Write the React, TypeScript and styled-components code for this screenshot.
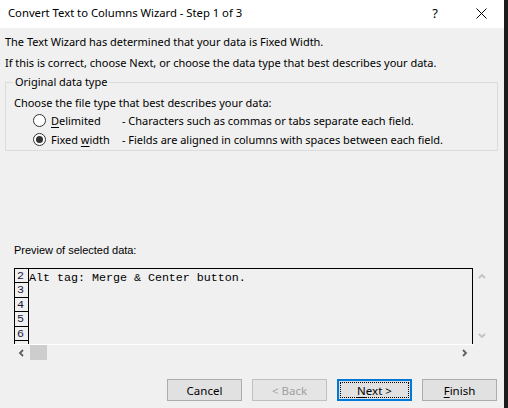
import React from 'react';
import styled, { createGlobalStyle } from 'styled-components';

const GlobalStyle = createGlobalStyle`
  html, body {
    margin: 0;
    padding: 0;
    background: #1f1f1f;
  }
  * {
    box-sizing: border-box;
  }
`;

const Screen = styled.div`
  display: flex;
  width: 508px;
  height: 408px;
  overflow: hidden;
`;

const Window = styled.div`
  display: flex;
  flex-direction: column;
  width: 504px;
  background: #f0f0f0;
  font-family: 'Noto Sans', 'Segoe UI', sans-serif;
  font-size: 11px;
  letter-spacing: -0.02px;
  color: #000;
`;

const Edge = styled.div`
  flex: 1;
  background: #1c1c1c;
`;

const TitleBar = styled.div`
  display: flex;
  align-items: center;
  height: 28px;
  background: #fff;
  padding-left: 8px;
`;

const Title = styled.span`
  flex: 1;
  font-size: 11.3px;
  line-height: 16px;
  margin-top: -2px;
`;

const TitleButton = styled.div`
  display: flex;
  align-items: center;
  justify-content: center;
  width: 46px;
  height: 28px;
  font-size: 13px;
  margin-top: -2px;
`;

const Body = styled.div`
  flex: 1;
  display: flex;
  flex-direction: column;
  padding: 4px 7px 7px 5px;
`;

const Intro = styled.p`
  margin: 0 0 1px;
  line-height: 20px;
  white-space: nowrap;
`;

const Group = styled.fieldset`
  margin: 0;
  width: 493px;
  height: 77px;
  padding: 6px 8px 0 8px;
  border: 1px solid #dcdcdc;
  display: flex;
  flex-direction: column;
`;

const Legend = styled.legend`
  padding: 0 2px;
  margin-left: -1px;
  line-height: 16px;
`;

const Prompt = styled.div`
  line-height: 18px;
  margin-top: -2px;
`;

const OptionRow = styled.label`
  display: flex;
  align-items: center;
  height: 19px;
  margin-top: -1px;
  margin-bottom: 1px;
  padding-left: 19px;
`;

const Radio = styled.span<{ $checked?: boolean }>`
  display: inline-flex;
  align-items: center;
  justify-content: center;
  width: 13px;
  height: 13px;
  border-radius: 50%;
  border: 1px solid #333;
  background: #fff;
  margin-right: 5px;

  &::after {
    content: '';
    display: ${({ $checked }) => ($checked ? 'block' : 'none')};
    width: 7px;
    height: 7px;
    border-radius: 50%;
    background: #333;
  }
`;

const OptionName = styled.span`
  width: 71px;
`;

const Key = styled.span`
  text-decoration: underline;
  text-underline-offset: 2px;
`;

const PreviewLabel = styled.div`
  margin: 92px 0 0 9px;
  font-family: 'Liberation Sans', Arial, sans-serif;
  font-size: 11px;
  line-height: 14px;
`;

const Preview = styled.div`
  display: grid;
  grid-template-columns: 459px 17px;
  grid-template-rows: 76px 16px;
  margin: 11px 0 0 9px;
`;

const DataBox = styled.div`
  border: 1px solid #000;
  border-bottom: none;
  display: flex;
  overflow: hidden;
  font-family: 'Liberation Mono', 'Courier New', monospace;
  font-size: 11.7px;
`;

const NumberColumn = styled.div`
  width: 14px;
  border-right: 1px solid #000;
  display: flex;
  flex-direction: column;
`;

const NumberCell = styled.div`
  height: 14.4px;
  line-height: 14px;
  border-bottom: 1px solid #000;
  padding-left: 2px;
  color: #1a1a40;
  flex-shrink: 0;
`;

const DataLines = styled.div`
  flex: 1;
  padding-top: 2px;
  line-height: 14px;
  white-space: pre;
`;

const VScroll = styled.div`
  display: flex;
  flex-direction: column;
  justify-content: space-between;
  align-items: center;
  padding: 5px 0 4px;
`;

const HScroll = styled.div`
  display: flex;
  align-items: stretch;
  border-top: 1px solid #fff;
`;

const ArrowBox = styled.div`
  width: 16px;
  display: flex;
  align-items: center;
  justify-content: center;
`;

const Thumb = styled.div`
  width: 17px;
  background: #cdcdcd;
`;

const Track = styled.div`
  flex: 1;
`;

const ButtonRow = styled.div`
  display: flex;
  justify-content: flex-end;
  gap: 10px;
  margin-top: auto;
`;

const Button = styled.button<{ $focused?: boolean }>`
  position: relative;
  width: 75px;
  height: 22px;
  padding: 0;
  font-family: inherit;
  font-size: 11.5px;
  color: ${({ disabled }) => (disabled ? '#a0a0a0' : '#000')};
  background: ${({ disabled }) => (disabled ? '#e5e5e5' : '#e1e1e1')};
  border: ${({ $focused, disabled }) =>
    $focused ? '2px solid #0078d7' : disabled ? '1px solid #bfbfbf' : '1px solid #adadad'};
  display: flex;
  align-items: center;
  justify-content: center;
`;

const FocusRing = styled.span`
  position: absolute;
  inset: 1px;
  border: 1px dotted #000;
  pointer-events: none;
`;

const Chevron: React.FC<{ dir: 'up' | 'down' | 'left' | 'right'; color: string }> = ({ dir, color }) => {
  const paths: Record<string, string> = {
    up: 'M1 5 L4 2 L7 5',
    down: 'M1 2 L4 5 L7 2',
    left: 'M5 1 L2 4 L5 7',
    right: 'M2 1 L5 4 L2 7',
  };
  return (
    <svg width="8" height="8" viewBox="0 0 8 8">
      <path d={paths[dir]} fill="none" stroke={color} strokeWidth="1.8" />
    </svg>
  );
};

const rows = ['2', '3', '4', '5', '6', ''];

export default function App() {
  return (
    <>
      <GlobalStyle />
      <Screen>
        <Window>
          <TitleBar>
            <Title>Convert Text to Columns Wizard - Step 1 of 3</Title>
            <TitleButton>?</TitleButton>
            <TitleButton>
              <svg width="11" height="11" viewBox="0 0 11 11">
                <path d="M0.5 0.5 L10.5 10.5 M10.5 0.5 L0.5 10.5" stroke="#000" strokeWidth="1" />
              </svg>
            </TitleButton>
          </TitleBar>
          <Body>
            <Intro>The Text Wizard has determined that your data is Fixed Width.</Intro>
            <Intro>If this is correct, choose Next, or choose the data type that best describes your data.</Intro>
            <Group>
              <Legend>Original data type</Legend>
              <Prompt>Choose the file type that best describes your data:</Prompt>
              <OptionRow>
                <Radio />
                <OptionName>
                  <Key>D</Key>elimited
                </OptionName>
                <span>- Characters such as commas or tabs separate each field.</span>
              </OptionRow>
              <OptionRow>
                <Radio $checked />
                <OptionName>
                  Fixed <Key>w</Key>idth
                </OptionName>
                <span>- Fields are aligned in columns with spaces between each field.</span>
              </OptionRow>
            </Group>
            <PreviewLabel>Preview of selected data:</PreviewLabel>
            <Preview>
              <DataBox>
                <NumberColumn>
                  {rows.map((r, i) => (
                    <NumberCell key={i}>{r}</NumberCell>
                  ))}
                </NumberColumn>
                <DataLines>Alt tag: Merge &amp; Center button.</DataLines>
              </DataBox>
              <VScroll>
                <Chevron dir="up" color="#c2c2c2" />
                <Chevron dir="down" color="#c2c2c2" />
              </VScroll>
              <HScroll>
                <ArrowBox>
                  <Chevron dir="left" color="#606060" />
                </ArrowBox>
                <Thumb />
                <Track />
                <ArrowBox>
                  <Chevron dir="right" color="#606060" />
                </ArrowBox>
              </HScroll>
            </Preview>
            <ButtonRow>
              <Button>Cancel</Button>
              <Button disabled>&lt; Back</Button>
              <Button $focused>
                <FocusRing />
                <span>
                  <Key>N</Key>ext &gt;
                </span>
              </Button>
              <Button>
                <span>
                  <Key>F</Key>inish
                </span>
              </Button>
            </ButtonRow>
          </Body>
        </Window>
        <Edge />
      </Screen>
    </>
  );
}
